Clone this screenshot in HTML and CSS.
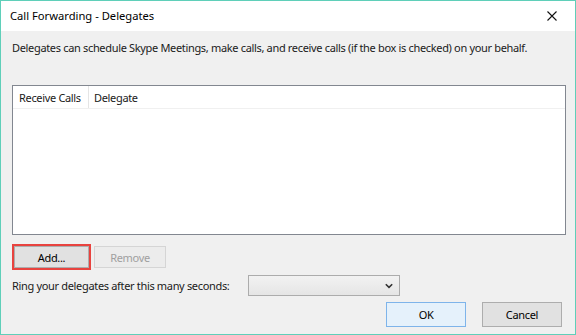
FILE: index.html
```html
<!DOCTYPE html>
<html lang="en">
<head>
    <meta charset="UTF-8">
    <link rel="stylesheet" href="styles.css">
    <title>Call Forwarding - Delegates</title>
</head>
<body>
    <div id="window">
        <div class="titlebar">
            <span class="title">Call Forwarding - Delegates</span>
            <button class="close-btn" aria-label="Close">
                <svg width="10" height="10" viewBox="0 0 10 10">
                    <path d="M0.5 0.5 L9.5 9.5 M9.5 0.5 L0.5 9.5" stroke="#111" stroke-width="1.1" fill="none"/>
                </svg>
            </button>
        </div>

        <div class="content">
            <p class="intro">Delegates can schedule Skype Meetings, make calls, and receive calls (if the box is checked) on your behalf.</p>

            <div class="list">
                <div class="list-head">
                    <div class="col col-receive">Receive Calls</div>
                    <div class="col col-delegate">Delegate</div>
                </div>
            </div>

            <div class="list-actions">
                <span class="highlight"><button class="btn">Add...</button></span>
                <button class="btn btn-remove" disabled>Remove</button>
            </div>

            <div class="ring-row">
                <label for="ringSeconds">Ring your delegates after this many seconds:</label>
                <div class="select" id="ringSeconds">
                    <svg width="8" height="6" viewBox="0 0 8 6">
                        <path d="M0.8 1.2 L4 4.4 L7.2 1.2" stroke="#333" stroke-width="1.6" fill="none"/>
                    </svg>
                </div>
            </div>

            <div class="footer">
                <button class="btn btn-wide btn-default">OK</button>
                <button class="btn btn-wide">Cancel</button>
            </div>
        </div>
    </div>
</body>
</html>
```

FILE: styles.css
```css
body {
    margin: 0;
    font-family: 'Noto Sans', 'Open Sans', sans-serif;
    font-size: 11px;
    color: #000000;
    background-color: #f0f0f0;
}

#window {
    width: 576px;
    height: 335px;
    box-sizing: border-box;
    border: 1px solid #5fcfb9;
    display: flex;
    flex-direction: column;
    background-color: #f0f0f0;
    white-space: nowrap;
}

.titlebar {
    height: 30px;
    flex-shrink: 0;
    background-color: #ffffff;
    display: flex;
    align-items: center;
    justify-content: space-between;
    padding: 0 0 0 9px;
}

.title {
    font-size: 11.2px;
    line-height: 16px;
}

.close-btn {
    width: 46px;
    height: 30px;
    border: none;
    background: none;
    padding: 0;
    display: flex;
    align-items: center;
    justify-content: center;
}

.content {
    flex: 1;
    display: flex;
    flex-direction: column;
    padding: 9px 9px 0 11px;
    letter-spacing: -0.33px;
    color: #1a1a1a;
}

.intro {
    margin: 0;
    line-height: 16px;
}

.list {
    margin-top: 29px;
    height: 150px;
    flex-shrink: 0;
    box-sizing: border-box;
    border: 1px solid #828790;
    background-color: #ffffff;
}

.list-head {
    display: flex;
    height: 22px;
    border-bottom: 1px solid #f0f0f0;
}

.col {
    display: flex;
    align-items: center;
    padding-left: 6px;
}

.col-receive {
    width: 69px;
    border-right: 1px solid #e5e5e5;
}

.col-delegate {
    flex: 1;
    padding-left: 5px;
}

.list-actions {
    margin-top: 9px;
    display: flex;
    align-items: center;
    gap: 3px;
}

.highlight {
    display: flex;
    border: 2px solid #e8433f;
}

.btn {
    width: 75px;
    height: 22px;
    box-sizing: border-box;
    border: 1px solid #adadad;
    background-color: #e1e1e1;
    font-family: inherit;
    font-size: 11px;
    letter-spacing: inherit;
    color: #000000;
    padding: 0;
}

.btn-remove {
    width: 72px;
    background-color: #ececec;
    border-color: #d5d5d5;
    color: #a0a0a0;
}

.ring-row {
    margin-top: 5px;
    display: flex;
    align-items: center;
}

.ring-row label {
    width: 236px;
    line-height: 16px;
}

.select {
    width: 152px;
    height: 21px;
    box-sizing: border-box;
    border: 1px solid #acacac;
    background: linear-gradient(#f2f2f2, #e5e5e5);
    display: flex;
    align-items: center;
    justify-content: flex-end;
    padding-right: 6px;
}

.footer {
    margin-top: 6px;
    display: flex;
    justify-content: flex-end;
    gap: 16px;
    padding-right: 4px;
}

.btn-wide {
    width: 80px;
    height: 25px;
}

.btn-default {
    border-color: #7eb4ea;
    background-color: #e5f1fb;
}
```
